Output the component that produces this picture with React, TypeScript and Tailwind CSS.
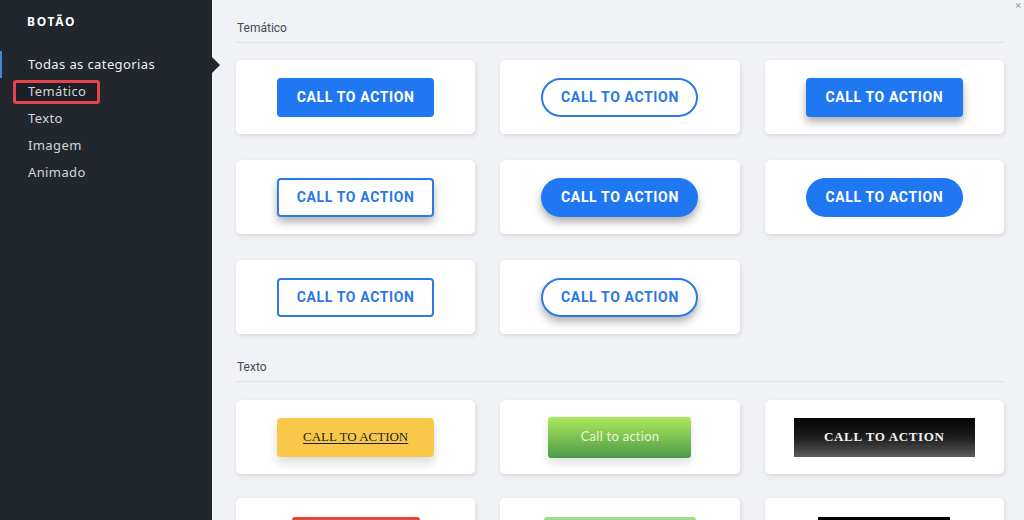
import React from "react";

const btnText = "CALL TO ACTION";

function Card({ children }: { children: React.ReactNode }) {
  return (
    <div className="h-[74px] bg-white rounded-[5px] shadow-[1px_2px_5px_rgba(0,0,0,0.11)] flex items-center justify-center">
      {children}
    </div>
  );
}

const roboto = "font-['Roboto','Liberation_Sans',sans-serif]";

export default function App() {
  const items = ["Todas as categorias", "Temático", "Texto", "Imagem", "Animado"];
  return (
    <div className="w-[1024px] h-[520px] overflow-hidden flex bg-[#f0f2f5]">
      <aside className="relative w-[212px] shrink-0 h-full bg-[#22262d] font-['Noto_Sans','Open_Sans',sans-serif]">
        <div className="pl-[27px] pt-[13px] h-[51px] text-[12px] font-bold tracking-[0.14em] text-white">BOTÃO</div>
        <ul>
          {items.map((it, i) => (
            <li key={it} className="relative h-[27px] flex items-center">
              {i === 0 && <span className="absolute left-0 top-0 w-[2px] h-[27px] bg-[#3d8bd9]" />}
              {i === 1 ? (
                <span className="ml-[13px] h-[24px] w-[87px] border-[3px] border-[#e8434d] rounded-[3px] bg-[#1b1e23] pl-[12px] flex items-center text-[13px] tracking-[0.03em] text-[#d3d6db]">
                  {it}
                </span>
              ) : (
                <span className={`pl-[28px] text-[13px] tracking-[0.03em] ${i === 0 ? "text-[#eef0f3]" : "text-[#d3d6db]"}`}>{it}</span>
              )}
            </li>
          ))}
        </ul>
        <span className="absolute left-[212px] top-[57px] w-0 h-0 border-y-[8px] border-y-transparent border-l-[8px] border-l-[#22262d]" />
      </aside>

      <main className={`relative flex-1 pl-[24px] pr-[20px] ${roboto}`}>
        <span className="absolute right-[3px] top-[-2px] text-[11px] text-[#9aa0a8]">×</span>
        <section>
          <div className="pt-[20px] pb-[6px] border-b border-[#dfe2e6] text-[12px] leading-[16px] text-[#444a52] pl-px">Temático</div>
          <div className="mt-[17px] grid grid-cols-3 gap-x-[25px] gap-y-[26px]">
            <Card>
              <div className="w-[157px] h-[39px] mt-px rounded-[4px] bg-[#1f78f2] text-white text-[14px] font-bold tracking-[0.045em] flex items-center justify-center">{btnText}</div>
            </Card>
            <Card>
              <div className="w-[157px] h-[39px] mt-px rounded-full border-2 border-[#2a7be6] text-[#2a78e4] text-[14px] font-bold tracking-[0.045em] flex items-center justify-center">{btnText}</div>
            </Card>
            <Card>
              <div className="w-[157px] h-[39px] mt-px rounded-[4px] bg-[#1f78f2] text-white text-[14px] font-bold tracking-[0.045em] flex items-center justify-center shadow-[0_5px_9px_rgba(0,0,0,0.32)]">{btnText}</div>
            </Card>
            <Card>
              <div className="w-[157px] h-[39px] mt-px rounded-[4px] border-2 border-[#2a7be6] bg-white text-[#2a78e4] text-[14px] font-bold tracking-[0.045em] flex items-center justify-center shadow-[0_5px_9px_rgba(0,0,0,0.3)]">{btnText}</div>
            </Card>
            <Card>
              <div className="w-[157px] h-[39px] mt-px rounded-full bg-[#1f78f2] text-white text-[14px] font-bold tracking-[0.045em] flex items-center justify-center shadow-[0_5px_9px_rgba(0,0,0,0.32)]">{btnText}</div>
            </Card>
            <Card>
              <div className="w-[157px] h-[39px] mt-px rounded-full bg-[#1f78f2] text-white text-[14px] font-bold tracking-[0.045em] flex items-center justify-center">{btnText}</div>
            </Card>
            <Card>
              <div className="w-[157px] h-[39px] mt-px rounded-[4px] border-2 border-[#2a7be6] bg-white text-[#2a78e4] text-[14px] font-bold tracking-[0.045em] flex items-center justify-center">{btnText}</div>
            </Card>
            <Card>
              <div className="w-[157px] h-[39px] mt-px rounded-full border-2 border-[#2a7be6] bg-white text-[#2a78e4] text-[14px] font-bold tracking-[0.045em] flex items-center justify-center shadow-[0_5px_9px_rgba(0,0,0,0.3)]">{btnText}</div>
            </Card>
          </div>
        </section>

        <section>
          <div className="mt-[25px] pb-[6px] border-b border-[#dfe2e6] text-[12px] leading-[16px] text-[#444a52] pl-px">Texto</div>
          <div className="mt-[18px] grid grid-cols-3 gap-x-[25px] gap-y-[24px]">
            <Card>
              <div className="w-[157px] h-[39px] rounded-[4px] bg-[#f9c849] text-[#1d1d1d] text-[13px] underline underline-offset-2 font-['Liberation_Serif',serif] flex items-center justify-center shadow-[0_6px_10px_rgba(0,0,0,0.14)]">{btnText}</div>
            </Card>
            <Card>
              <div className="w-[143px] h-[41px] rounded-[3px] bg-gradient-to-b from-[#aeea5e] to-[#4b9a48] text-[#e6f8d4] text-[13px] font-['Lato','Open_Sans',sans-serif] tracking-[0.02em] flex items-center justify-center shadow-[0_5px_9px_rgba(0,0,0,0.12)]">Call to action</div>
            </Card>
            <Card>
              <div className="w-[181px] h-[39px] bg-gradient-to-b from-[#050505] via-[#1e1e1e] to-[#5c5c5c] text-[#f2f2f2] text-[13px] font-bold tracking-[0.05em] font-['Liberation_Serif',serif] flex items-center justify-center">{btnText}</div>
            </Card>
            <Card>
              <div className="w-[128px] h-[39px] mt-[2px] rounded-[3px] bg-[#e5453a]" />
            </Card>
            <Card>
              <div className="w-[152px] h-[39px] mt-[2px] rounded-[3px] bg-gradient-to-b from-[#a5dc8a] to-[#5aa84e]" />
            </Card>
            <Card>
              <div className="w-[132px] h-[39px] mt-[2px] bg-black" />
            </Card>
          </div>
        </section>
      </main>
    </div>
  );
}
